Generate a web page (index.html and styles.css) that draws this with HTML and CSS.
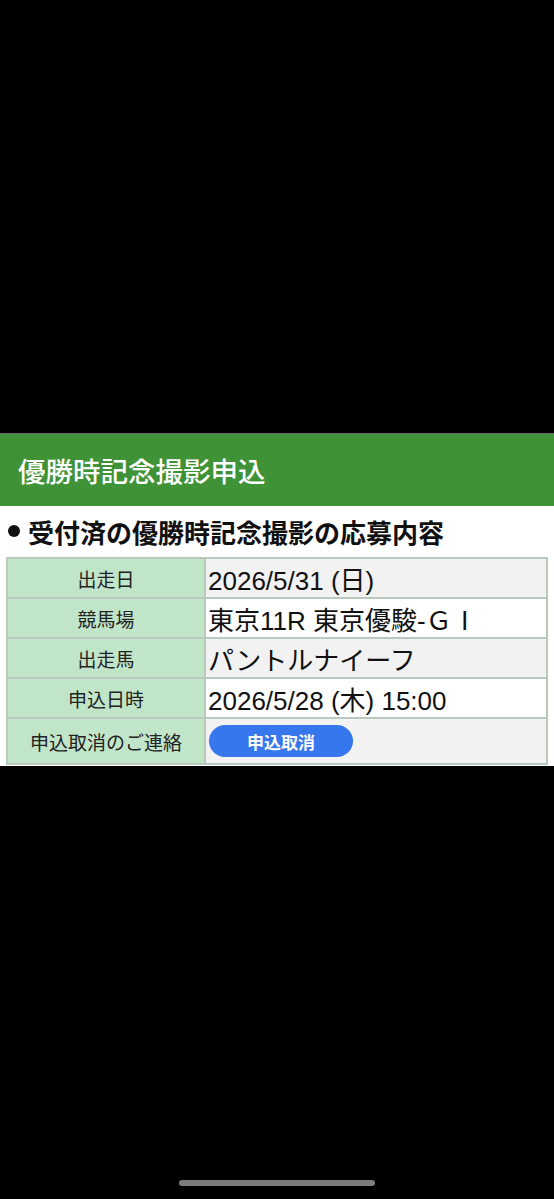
FILE: index.html
```html
<!DOCTYPE html>
<html lang="ja">
<head>
<meta charset="utf-8">
<link rel="stylesheet" href="styles.css">
</head>
<body>
<div class="screen">
  <div class="top-space"></div>
  <div class="page">
    <header class="header">優勝時記念撮影申込</header>
    <h2 class="heading"><span class="dot"></span>受付済の優勝時記念撮影の応募内容</h2>
    <table class="info">
      <tr class="odd"><th>出走日</th><td>2026/5/31 (日)</td></tr>
      <tr class="even"><th>競馬場</th><td>東京11R 東京優駿-ＧⅠ</td></tr>
      <tr class="odd"><th>出走馬</th><td>パントルナイーフ</td></tr>
      <tr class="even"><th>申込日時</th><td>2026/5/28 (木) 15:00</td></tr>
      <tr class="odd"><th>申込取消のご連絡</th><td><button class="cancel">申込取消</button></td></tr>
    </table>
  </div>
  <div class="bottom-space"><div class="home-bar"></div></div>
</div>
</body>
</html>
```

FILE: styles.css
```css
html, body {
  margin: 0;
  padding: 0;
  background: #000;
}
body {
  font-family: "Liberation Sans", "Noto Sans CJK JP", sans-serif;
}
.screen {
  width: 554px;
  height: 1199px;
  display: flex;
  flex-direction: column;
}
.top-space {
  height: 434px;
  border-bottom: 1px solid #6a6a6a;
  box-sizing: border-box;
}
.page {
  background: #fff;
  padding-bottom: 1px;
}
.header {
  background: #3f9236;
  color: #fff;
  height: 72px;
  display: flex;
  align-items: center;
  padding-left: 18px;
  font-size: 27.5px;
  font-weight: 500;
}
.heading {
  margin: 0;
  height: 50px;
  display: flex;
  align-items: center;
  padding-left: 8px;
  font-size: 26px;
  font-weight: bold;
  color: #111;
}
.dot {
  width: 12px;
  height: 12px;
  border-radius: 50%;
  background: #111;
  margin-right: 8px;
}
.info {
  margin: 1px 6px 0 6px;
  width: 542px;
  border-collapse: collapse;
  border: 2px solid #b9c9bd;
}
.info th, .info td {
  border: 2px solid #b9c9bd;
  height: 38px;
  padding: 0;
}
.info th {
  width: 196px;
  background: #c1e5c9;
  font-weight: normal;
  font-size: 19px;
  color: #222;
  text-align: center;
}
.info td {
  font-size: 26px;
  color: #111;
  padding-left: 2px;
}
.info tr.odd td { background: #f2f2f2; }
.info tr.even td { background: #fff; }
.info tr:last-child th, .info tr:last-child td { height: 44px; }
.cancel {
  border: none;
  background: #3677ee;
  color: #fff;
  font-family: inherit;
  font-weight: bold;
  font-size: 17px;
  width: 144px;
  height: 32px;
  border-radius: 16px;
  margin-left: 1px;
  display: block;
}
.bottom-space {
  flex: 1;
  display: flex;
  align-items: flex-end;
  justify-content: center;
  padding-bottom: 13px;
}
.home-bar {
  width: 196px;
  height: 6px;
  border-radius: 3px;
  background: #7d7d7d;
}
```
